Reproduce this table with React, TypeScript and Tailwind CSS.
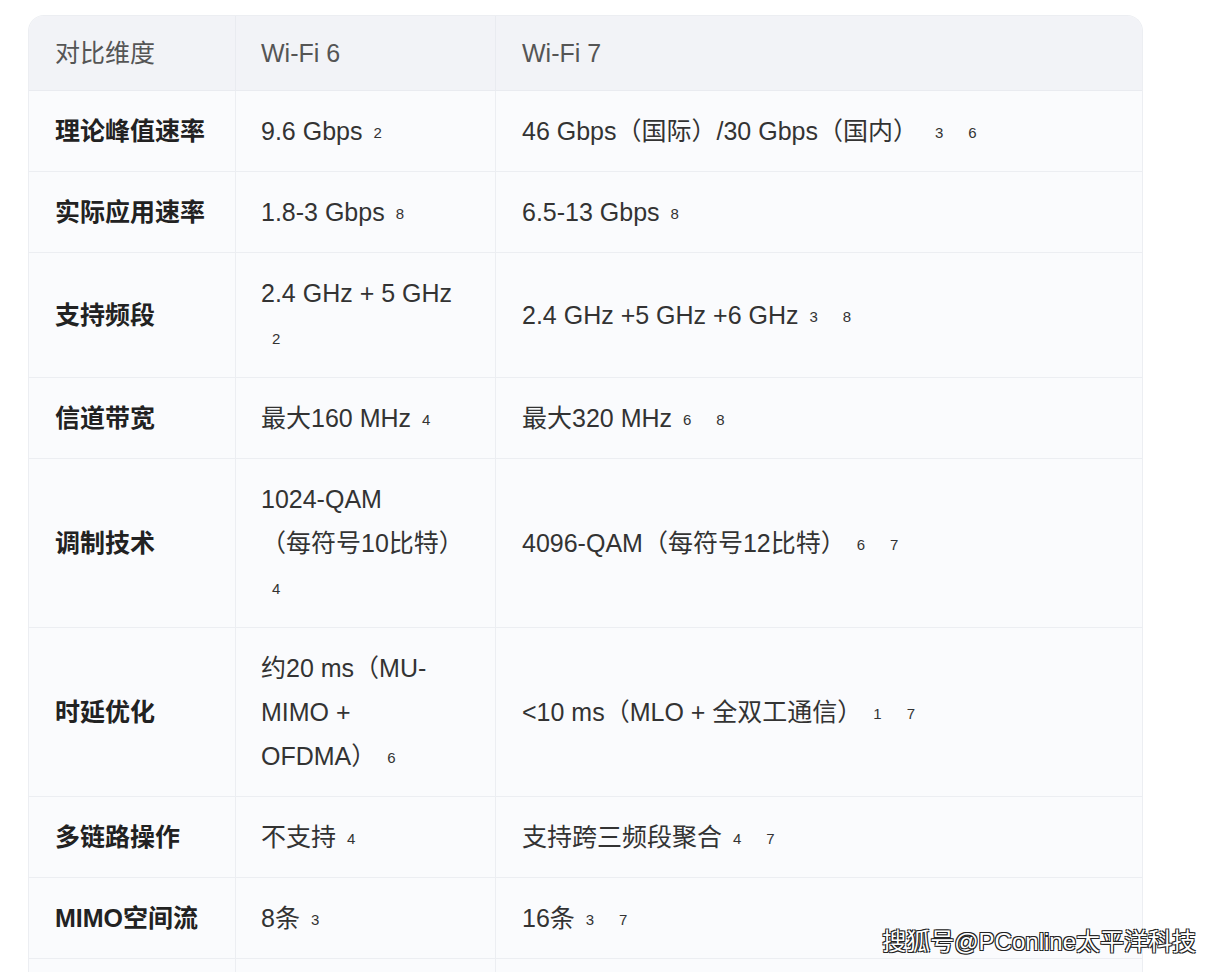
import React from "react";

const FONT = { fontFamily: '"Liberation Sans", "Noto Sans CJK SC", sans-serif' };

function M({ n }: { n: string }) {
  return (
    <span className="ml-[4px] inline-block px-[7px] align-middle text-[15px] leading-[20px] text-[#333]">
      {n}
    </span>
  );
}

type Row = { k: string; a: React.ReactNode; b: React.ReactNode };

const rows: Row[] = [
  { k: "理论峰值速率", a: <>9.6 Gbps<M n="2" /></>, b: <>46 Gbps（国际）/30 Gbps（国内）<span className="ml-[6px]" /><M n="3" /> <M n="6" /></> },
  { k: "实际应用速率", a: <>1.8-3 Gbps<M n="8" /></>, b: <>6.5-13 Gbps<M n="8" /></> },
  { k: "支持频段", a: <>2.4 GHz + 5 GHz<br /><M n="2" /></>, b: <>2.4 GHz +5 GHz +6 GHz<M n="3" /> <M n="8" /></> },
  { k: "信道带宽", a: <>最大160 MHz<M n="4" /></>, b: <>最大320 MHz<M n="6" /> <M n="8" /></> },
  { k: "调制技术", a: <>1024-QAM<br />（每符号10比特）<br /><M n="4" /></>, b: <>4096-QAM（每符号12比特）<M n="6" /> <M n="7" /></> },
  { k: "时延优化", a: <>约20 ms（MU-<br />MIMO +<br />OFDMA）<M n="6" /></>, b: <>&lt;10 ms（MLO + 全双工通信）<M n="1" /> <M n="7" /></> },
  { k: "多链路操作", a: <>不支持<M n="4" /></>, b: <>支持跨三频段聚合<M n="4" /> <M n="7" /></> },
  { k: "MIMO空间流", a: <>8条<M n="3" /></>, b: <>16条<M n="3" /> <M n="7" /></> },
  { k: "\u00a0", a: <>&nbsp;</>, b: <>&nbsp;</> },
];

export default function App() {
  return (
    <div className="relative min-h-[972px] w-full overflow-hidden bg-white" style={FONT}>
      <div className="pl-[28px] pr-[89px] pt-[15px]">
        <div className="overflow-hidden rounded-t-[16px] border border-b-0 border-[#eceef2] bg-[#fafbfd]">
          <div className="grid grid-cols-[207px_260px_1fr]">
            <div className="flex items-center border-r border-b border-[#e9ebf0] bg-[#f2f3f7] pl-[26px] pt-[15px] pb-[15px] text-[25px] leading-[44px] text-[#555]">
              对比维度
            </div>
            <div className="flex items-center border-r border-b border-[#e9ebf0] bg-[#f2f3f7] pl-[25px] pt-[15px] pb-[15px] text-[25px] leading-[44px] text-[#555]">
              Wi-Fi 6
            </div>
            <div className="flex items-center border-b border-[#e9ebf0] bg-[#f2f3f7] pl-[26px] pt-[15px] pb-[15px] text-[25px] leading-[44px] text-[#555]">
              Wi-Fi 7
            </div>
            {rows.map((r, i) => (
              <React.Fragment key={i}>
                <div className="flex items-center border-r border-b border-[#eceef2] py-[18px] pl-[26px] text-[25px] font-bold leading-[44px] text-[#222]">
                  <div>{r.k}</div>
                </div>
                <div className="flex items-center border-r border-b border-[#eceef2] py-[18px] pl-[25px] pr-[20px] text-[25px] leading-[44px] text-[#333]">
                  <div>{r.a}</div>
                </div>
                <div className="flex items-center border-b border-[#eceef2] py-[18px] pl-[26px] pr-[20px] text-[25px] leading-[44px] text-[#333]">
                  <div>{r.b}</div>
                </div>
              </React.Fragment>
            ))}
          </div>
        </div>
      </div>
      <div
        className="absolute right-[36px] top-[926px] text-[24px] leading-[32px] text-white"
        style={{ textShadow: "1px 1px 0 #222, -1px -1px 0 #222, 1px -1px 0 #222, -1px 1px 0 #222" }}
      >
        搜狐号@PConline太平洋科技
      </div>
    </div>
  );
}
